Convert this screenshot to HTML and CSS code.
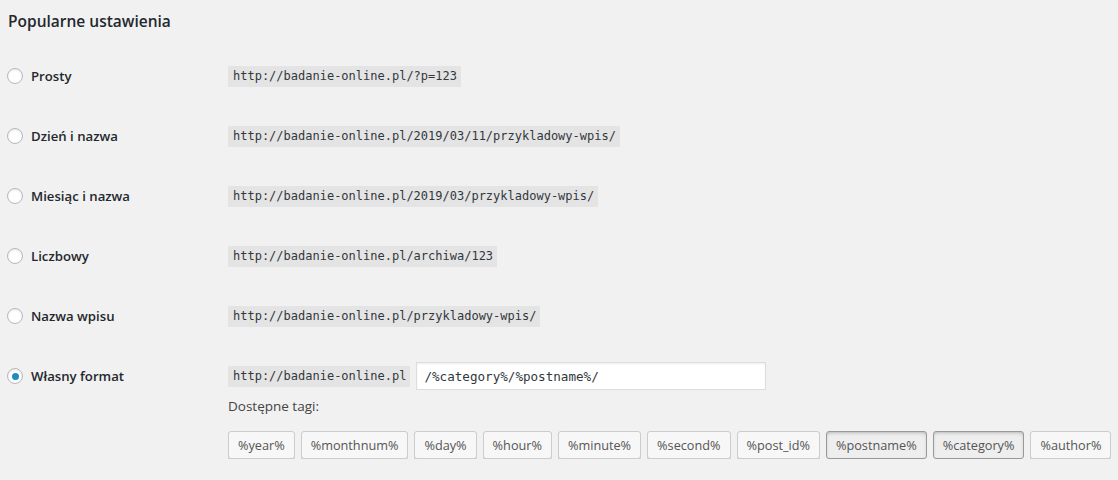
FILE: index.html
```html
<!DOCTYPE html>
<html lang="pl">
<head>
    <meta charset="UTF-8">
    <meta name="viewport" content="width=device-width, initial-scale=1.0">
    <title>Ustawienia bezpośrednich odnośników</title>
    <link rel="stylesheet" href="styles.css">
</head>
<body>
    <div class="wrap">
        <h2 class="section-title">Popularne ustawienia</h2>

        <div class="permalink-row">
            <label class="choice"><span class="radio"></span>Prosty</label>
            <code class="sample">http://badanie-online.pl/?p=123</code>
        </div>
        <div class="permalink-row">
            <label class="choice"><span class="radio"></span>Dzień i nazwa</label>
            <code class="sample">http://badanie-online.pl/2019/03/11/przykladowy-wpis/</code>
        </div>
        <div class="permalink-row">
            <label class="choice"><span class="radio"></span>Miesiąc i nazwa</label>
            <code class="sample">http://badanie-online.pl/2019/03/przykladowy-wpis/</code>
        </div>
        <div class="permalink-row">
            <label class="choice"><span class="radio"></span>Liczbowy</label>
            <code class="sample">http://badanie-online.pl/archiwa/123</code>
        </div>
        <div class="permalink-row">
            <label class="choice"><span class="radio"></span>Nazwa wpisu</label>
            <code class="sample">http://badanie-online.pl/przykladowy-wpis/</code>
        </div>

        <div class="custom-row">
            <label class="choice"><span class="radio checked"></span>Własny format</label>
            <div class="custom-field">
                <div class="custom-line">
                    <code class="sample">http://badanie-online.pl</code>
                    <input class="structure-input" type="text" value="/%category%/%postname%/">
                </div>
                <p class="tags-label">Dostępne tagi:</p>
                <div class="tag-list">
                    <button class="tag-button">%year%</button>
                    <button class="tag-button">%monthnum%</button>
                    <button class="tag-button">%day%</button>
                    <button class="tag-button">%hour%</button>
                    <button class="tag-button">%minute%</button>
                    <button class="tag-button">%second%</button>
                    <button class="tag-button">%post_id%</button>
                    <button class="tag-button active">%postname%</button>
                    <button class="tag-button active">%category%</button>
                    <button class="tag-button">%author%</button>
                </div>
            </div>
        </div>
    </div>
</body>
</html>
```

FILE: styles.css
```css
body {
    margin: 0;
    background-color: #f1f1f1;
    color: #23282d;
    font-family: "Open Sans", Arial, sans-serif;
    font-size: 13px;
}

.wrap {
    padding-left: 7px;
}

.section-title {
    margin: 0;
    padding: 8px 0 0 1px;
    height: 38px;
    line-height: 26px;
    font-size: 15.5px;
    font-weight: 600;
    color: #23282d;
}

.permalink-row {
    display: flex;
    align-items: center;
    height: 60px;
}

.choice {
    display: flex;
    align-items: center;
    width: 221px;
    flex-shrink: 0;
    font-size: 13.2px;
    font-weight: 600;
    color: #23282d;
}

.radio {
    box-sizing: border-box;
    width: 16px;
    height: 16px;
    margin-right: 8px;
    border: 1px solid #b4b9be;
    border-radius: 50%;
    background-color: #fff;
    box-shadow: inset 0 1px 2px rgba(0, 0, 0, 0.1);
    display: flex;
    align-items: center;
    justify-content: center;
}

.radio.checked::before {
    content: "";
    width: 7px;
    height: 7px;
    border-radius: 50%;
    background-color: #1e8cbe;
}

.sample {
    display: inline-block;
    padding: 2px 4px 2px 5px;
    line-height: 17px;
    font-family: "DejaVu Sans Mono", monospace;
    font-size: 12px;
    color: #32373c;
    background-color: #e4e4e4;
}

.custom-row {
    display: flex;
    align-items: flex-start;
    padding-top: 16px;
}

.custom-row .choice {
    height: 28px;
}

.custom-line {
    display: flex;
    align-items: center;
    gap: 6px;
    height: 28px;
}

.structure-input {
    box-sizing: border-box;
    width: 350px;
    height: 28px;
    margin: 0;
    padding: 3px 7px;
    border: 1px solid #ddd;
    background-color: #fff;
    box-shadow: inset 0 1px 2px rgba(0, 0, 0, 0.07);
    font-family: "DejaVu Sans Mono", monospace;
    font-size: 12.6px;
    color: #32373c;
}

.tags-label {
    margin: 6px 0 0;
    line-height: 20px;
    font-size: 13.5px;
    color: #444;
}

.tag-list {
    display: flex;
    gap: 6px;
    margin-top: 15px;
}

.tag-button {
    box-sizing: border-box;
    height: 28px;
    margin: 0;
    padding: 0 9px;
    border: 1px solid #ccc;
    border-radius: 3px;
    background-color: #f7f7f7;
    box-shadow: 0 1px 0 #ccc;
    font-family: "Open Sans", Arial, sans-serif;
    font-size: 12.7px;
    color: #555;
}

.tag-button.active {
    background-color: #eee;
    border-color: #999;
    box-shadow: inset 0 2px 5px -3px rgba(0, 0, 0, 0.5);
}
```
